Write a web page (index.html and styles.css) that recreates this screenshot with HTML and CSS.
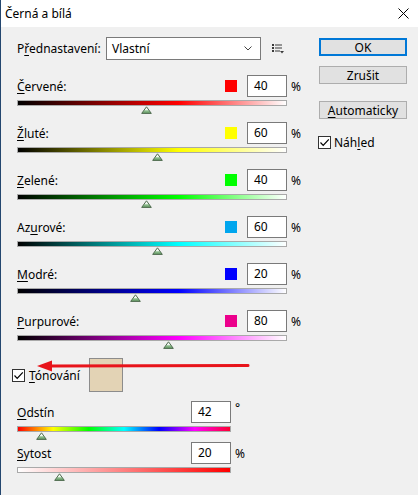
FILE: index.html
```html
<!DOCTYPE html>
<html lang="cs">
<head>
<meta charset="utf-8">
<title>Černá a bílá</title>
<link rel="stylesheet" href="styles.css">
</head>
<body>
<div class="window">
  <div class="titlebar">
    <span class="title">Černá a bílá</span>
    <svg class="close" viewBox="0 0 11 11" width="11" height="11"><path d="M0.5 0.5 L10.5 10.5 M10.5 0.5 L0.5 10.5" stroke="#000" stroke-width="1" fill="none"/></svg>
  </div>
  <div class="content">
    <div class="main">
      <div class="left">
        <div class="preset">
          <span class="preset-label">P<u>ř</u>ednastavení:</span>
          <div class="select">
            <span class="select-text">Vlastní</span>
            <svg class="chevron" viewBox="0 0 8 5" width="8" height="5"><path d="M0.5 0.5 L4 4 L7.5 0.5" stroke="#444" stroke-width="1" fill="none"/></svg>
          </div>
          <svg class="menu-icon" viewBox="0 0 12 10" width="12" height="10">
            <rect x="0" y="0" width="2" height="2" fill="#3a3a3a"/><rect x="3" y="0.5" width="7" height="1" fill="#3a3a3a"/>
            <rect x="0" y="3" width="2" height="2" fill="#3a3a3a"/><rect x="3" y="3.5" width="7" height="1" fill="#3a3a3a"/>
            <rect x="0" y="6" width="2" height="2" fill="#3a3a3a"/><rect x="3" y="6.5" width="5" height="1" fill="#3a3a3a"/>
            <path d="M8 7 L12 7 L10 9.5 Z" fill="#3a3a3a"/>
          </svg>
        </div>

        <div class="channels">
          <div class="channel">
            <div class="row-head">
              <span class="label"><u>Č</u>ervené:</span>
              <span class="swatch sw-red"></span>
              <span class="num">40</span><span class="unit">%</span>
            </div>
            <div class="track"><div class="bar bar-red"></div>
              <svg class="thumb" style="left:calc(48% - 5.5px)" viewBox="0 0 11 8" width="11" height="8"><use href="#thumb"/></svg>
            </div>
          </div>
          <div class="channel">
            <div class="row-head">
              <span class="label"><u>Ž</u>luté:</span>
              <span class="swatch sw-yellow"></span>
              <span class="num">60</span><span class="unit">%</span>
            </div>
            <div class="track"><div class="bar bar-yellow"></div>
              <svg class="thumb" style="left:calc(52% - 5.5px)" viewBox="0 0 11 8" width="11" height="8"><use href="#thumb"/></svg>
            </div>
          </div>
          <div class="channel">
            <div class="row-head">
              <span class="label"><u>Z</u>elené:</span>
              <span class="swatch sw-green"></span>
              <span class="num">40</span><span class="unit">%</span>
            </div>
            <div class="track"><div class="bar bar-green"></div>
              <svg class="thumb" style="left:calc(48% - 5.5px)" viewBox="0 0 11 8" width="11" height="8"><use href="#thumb"/></svg>
            </div>
          </div>
          <div class="channel">
            <div class="row-head">
              <span class="label">Az<u>u</u>rové:</span>
              <span class="swatch sw-cyan"></span>
              <span class="num">60</span><span class="unit">%</span>
            </div>
            <div class="track"><div class="bar bar-cyan"></div>
              <svg class="thumb" style="left:calc(52% - 5.5px)" viewBox="0 0 11 8" width="11" height="8"><use href="#thumb"/></svg>
            </div>
          </div>
          <div class="channel">
            <div class="row-head">
              <span class="label"><u>M</u>odré:</span>
              <span class="swatch sw-blue"></span>
              <span class="num">20</span><span class="unit">%</span>
            </div>
            <div class="track"><div class="bar bar-blue"></div>
              <svg class="thumb" style="left:calc(44% - 5.5px)" viewBox="0 0 11 8" width="11" height="8"><use href="#thumb"/></svg>
            </div>
          </div>
          <div class="channel">
            <div class="row-head">
              <span class="label"><u>P</u>urpurové:</span>
              <span class="swatch sw-magenta"></span>
              <span class="num">80</span><span class="unit">%</span>
            </div>
            <div class="track"><div class="bar bar-magenta"></div>
              <svg class="thumb" style="left:calc(56% - 5.5px)" viewBox="0 0 11 8" width="11" height="8"><use href="#thumb"/></svg>
            </div>
          </div>
        </div>
      </div>

      <div class="right">
        <div class="btn btn-default">OK</div>
        <div class="btn btn-cancel">Zrušit</div>
        <div class="btn btn-auto"><u>A</u>utomaticky</div>
        <div class="check-row">
          <span class="checkbox"><svg viewBox="0 0 11 11" width="11" height="11"><path d="M1.5 5.5 L4.2 8.3 L9.8 2.3" stroke="#000" stroke-width="1.2" fill="none"/></svg></span>
          <span>Náh<u>l</u>ed</span>
        </div>
      </div>
    </div>

    <div class="toning">
      <span class="checkbox"><svg viewBox="0 0 11 11" width="11" height="11"><path d="M1.5 5.5 L4.2 8.3 L9.8 2.3" stroke="#000" stroke-width="1.2" fill="none"/></svg></span>
      <span class="toning-label"><u>T</u>ónování</span>
      <span class="tone-swatch"></span>
    </div>

    <div class="tone-rows">
      <div class="tone-row">
        <div class="row-head">
          <span class="label"><u>O</u>dstín</span>
          <span class="num">42</span><span class="unit unit-deg">°</span>
        </div>
        <div class="track"><div class="bar bar-hue"></div>
          <svg class="thumb" style="left:calc(11.67% - 5.5px)" viewBox="0 0 11 8" width="11" height="8"><use href="#thumb"/></svg>
        </div>
      </div>
      <div class="tone-row">
        <div class="row-head">
          <span class="label"><u>S</u>ytost</span>
          <span class="num">20</span><span class="unit">%</span>
        </div>
        <div class="track"><div class="bar bar-sat"></div>
          <svg class="thumb" style="left:calc(20% - 5.5px)" viewBox="0 0 11 8" width="11" height="8"><use href="#thumb"/></svg>
        </div>
      </div>
    </div>
  </div>

  <svg class="arrow" viewBox="0 0 216 14" width="216" height="14">
    <path d="M14 7 L212 6.5" stroke="#e8141b" stroke-width="3" stroke-linecap="round" fill="none"/>
    <path d="M1 7 L16 1.5 L16 12.5 Z" fill="#e8141b"/>
  </svg>
</div>

<svg width="0" height="0" class="defs">
  <defs>
    <linearGradient id="thumbfill" x1="0" y1="0" x2="0" y2="1">
      <stop offset="0" stop-color="#ffffff"/>
      <stop offset="0.45" stop-color="#eef6ee"/>
      <stop offset="0.6" stop-color="#8fbf8f"/>
      <stop offset="1" stop-color="#5f955f"/>
    </linearGradient>
    <symbol id="thumb" viewBox="0 0 11 8">
      <path d="M5.5 0.8 L10.3 7.4 L0.7 7.4 Z" fill="url(#thumbfill)" stroke="#4f6b4f" stroke-width="1" stroke-linejoin="round"/>
    </symbol>
  </defs>
</svg>
</body>
</html>
```

FILE: styles.css
```css
* { box-sizing: border-box; }
html, body { margin: 0; padding: 0; }
body {
  width: 418px;
  height: 495px;
  overflow: hidden;
  background: #24476f;
  font-family: "Noto Sans", "Segoe UI", sans-serif;
  font-size: 12px;
  color: #000;
}
u { text-decoration-thickness: 1px; text-underline-offset: 2px; }
.defs { position: absolute; }

.window {
  position: relative;
  height: 495px;
  margin-left: 1px;
  background: #f0f0f0;
  display: flex;
  flex-direction: column;
}
.titlebar {
  height: 27px;
  flex: none;
  background: #fff;
  display: flex;
  align-items: center;
  padding-left: 4px;
}
.title { flex: 1; font-size: 12px; }
.close { margin-right: 9px; }

.content { padding: 10px 11px 0 16px; }
.main { display: flex; }
.left { width: 290px; }
.right {
  margin-left: auto;
  width: 88px;
  display: flex;
  flex-direction: column;
}

/* preset row */
.preset { height: 23px; display: flex; align-items: center; }
.preset-label { width: 89px; }
.select {
  width: 155px;
  height: 23px;
  background: #fff;
  border: 1px solid #7a7a7a;
  display: flex;
  align-items: center;
  padding: 0 6px 0 5px;
}
.select-text { flex: 1; }
.chevron { margin-right: 2px; }
.menu-icon { margin-left: 11px; }

/* channels */
.channels { margin-top: 15px; }
.channel { height: 47px; }
.row-head { height: 22px; display: flex; align-items: center; }
.label { flex: 1; }
.swatch { width: 12px; height: 12px; margin-right: 10px; }
.sw-red { background: #ff0000; }
.sw-yellow { background: #ffff00; }
.sw-green { background: #00ff00; }
.sw-cyan { background: #00a6ee; }
.sw-blue { background: #0000ff; }
.sw-magenta { background: #ec008c; }
.num {
  width: 40px;
  height: 22px;
  background: #fff;
  border: 1px solid #7a7a7a;
  padding-left: 6px;
  line-height: 20px;
}
.unit { width: 20px; padding-left: 4px; }
.unit-deg { align-self: flex-start; line-height: 14px; }

.track { position: relative; width: 270px; margin-top: 3px; height: 6px; }
.bar { height: 6px; border: 1px solid #a9a9a9; }
.thumb { position: absolute; top: 6px; }
.bar-red { background: linear-gradient(to right, #000, #ff0000 60%, #fff); }
.bar-yellow { background: linear-gradient(to right, #000, #ffff00 60%, #fff); }
.bar-green { background: linear-gradient(to right, #000, #00ff00 60%, #fff); }
.bar-cyan { background: linear-gradient(to right, #000, #00ffff 60%, #fff); }
.bar-blue { background: linear-gradient(to right, #000, #0000ff 60%, #fff); }
.bar-magenta { background: linear-gradient(to right, #000, #ff00ff 60%, #fff); }

/* buttons */
.btn {
  height: 18px;
  background: #e1e1e1;
  border: 1px solid #adadad;
  display: flex;
  align-items: center;
  justify-content: center;
}
.btn-default { margin-top: 1px; border: 2px solid #0078d7; }
.btn-cancel { margin-top: 10px; }
.btn-auto { margin-top: 17px; }
.check-row {
  margin-top: 15px;
  display: flex;
  align-items: center;
  margin-left: -1px;
}
.checkbox {
  width: 13px;
  height: 13px;
  background: #fff;
  border: 1px solid #333;
  display: flex;
  align-items: center;
  justify-content: center;
  margin-right: 3px;
  flex: none;
}

/* toning */
.toning {
  margin-top: 1px;
  margin-left: -5px;
  height: 34px;
  display: flex;
  align-items: center;
}
.toning .checkbox { margin-right: 4px; }
.toning-label { width: 60px; }
.tone-swatch {
  width: 34px;
  height: 34px;
  background: #e3d3b5;
  border: 1px solid #8c8c8c;
}

.tone-rows { margin-top: 9px; }
.tone-row { width: 234px; height: 41px; }
.tone-row .track { width: 214px; }
.bar-hue {
  background: linear-gradient(to right, #ff0000, #ffff00 16.6%, #00ff00 33.3%, #00ffff 50%, #0000ff 66.6%, #ff00ff 83.3%, #ff0030);
}
.bar-sat { background: linear-gradient(to right, #fff, #ff0000); }

.arrow { position: absolute; left: 35px; top: 359px; }
```
